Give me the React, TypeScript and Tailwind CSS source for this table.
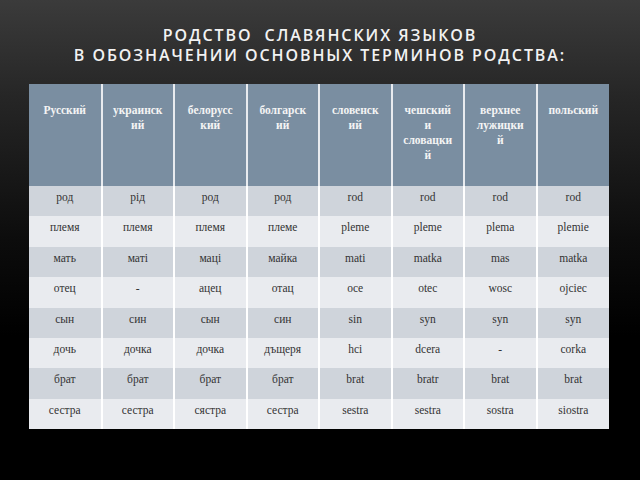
const headers: string[][] = [
  ['Русский'],
  ['украинск', 'ий'],
  ['белорусс', 'кий'],
  ['болгарск', 'ий'],
  ['словенск', 'ий'],
  ['чешский', 'и', 'словацки', 'й'],
  ['верхнее', 'лужицки', 'й'],
  ['польский'],
];

const rows: string[][] = [
  ['род', 'рід', 'род', 'род', 'rod', 'rod', 'rod', 'rod'],
  ['племя', 'племя', 'племя', 'племе', 'pleme', 'pleme', 'plema', 'plemie'],
  ['мать', 'маті', 'маці', 'майка', 'mati', 'matka', 'mas', 'matka'],
  ['отец', '-', 'ацец', 'отац', 'oce', 'otec', 'wosc', 'ojciec'],
  ['сын', 'син', 'сын', 'син', 'sin', 'syn', 'syn', 'syn'],
  ['дочь', 'дочка', 'дочка', 'дъщеря', 'hci', 'dcera', '-', 'corka'],
  ['брат', 'брат', 'брат', 'брат', 'brat', 'bratr', 'brat', 'brat'],
  ['сестра', 'сестра', 'сястра', 'сестра', 'sestra', 'sestra', 'sostra', 'siostra'],
];

const App = () => {
  return (
    <div className="w-[640px] h-[480px] overflow-hidden bg-[linear-gradient(180deg,#3b3b3b_0%,#262626_20%,#0c0c0c_50%,#000_70%)]">
      <h1 className="pt-[25px] text-center text-[16px] leading-[20px] font-semibold tracking-[0.12em] text-[#f2f2f2] font-['Open_Sans',sans-serif] whitespace-pre">
        {'РОДСТВО  СЛАВЯНСКИХ ЯЗЫКОВ\nВ ОБОЗНАЧЕНИИ ОСНОВНЫХ ТЕРМИНОВ РОДСТВА:'}
      </h1>

      <table className="mt-[19px] ml-[29px] w-[580px] table-fixed border-collapse font-['Liberation_Serif',serif] text-[11.5px] leading-[14px]">
        <thead>
          <tr className="h-[102px] bg-[#7a8ea1]">
            {headers.map((h, i) => (
              <th
                key={i}
                className={`align-top pt-[19px] text-center font-bold text-[#f4f4f4] leading-[15px] ${i > 0 ? 'border-l-2 border-[#e8ebef]' : ''}`}
              >
                {h.map((line, j) => (
                  <div key={j}>{line}</div>
                ))}
              </th>
            ))}
          </tr>
        </thead>
        <tbody>
          {rows.map((r, i) => (
            <tr key={i} className={`h-[30.4px] ${i % 2 === 0 ? 'bg-[#cfd4db]' : 'bg-[#e9ebef]'}`}>
              {r.map((cell, j) => (
                <td
                  key={j}
                  className={`align-top pt-[4px] text-center text-[#333] ${j > 0 ? 'border-l-2 border-white' : ''}`}
                >
                  {cell}
                </td>
              ))}
            </tr>
          ))}
        </tbody>
      </table>
    </div>
  );
};

export default App;
